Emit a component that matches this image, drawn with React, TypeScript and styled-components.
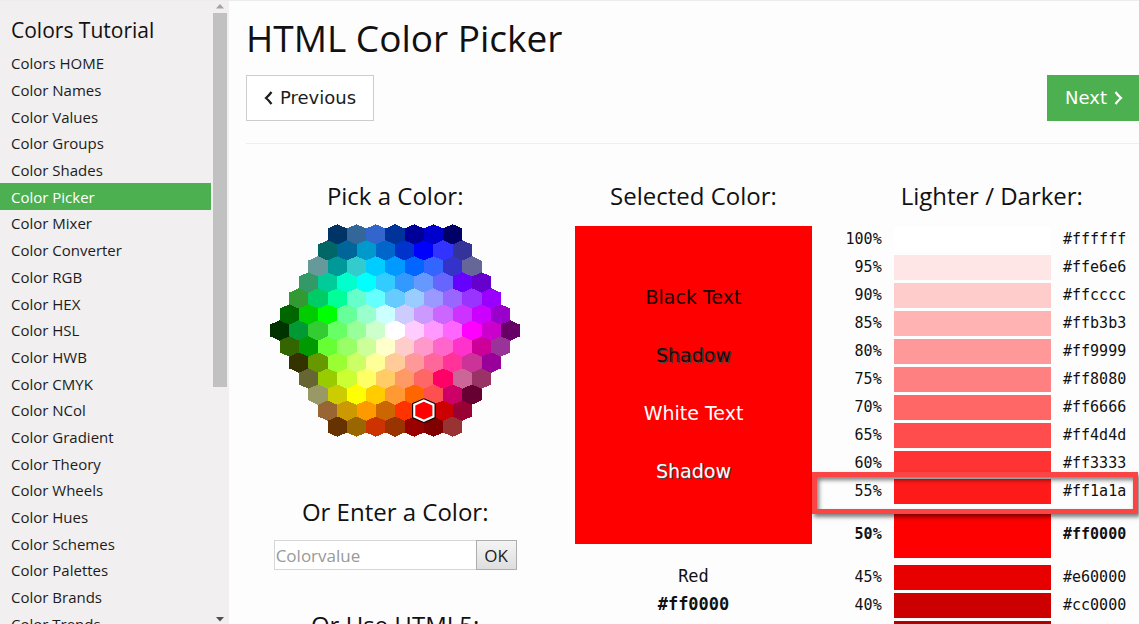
import React from "react";
import styled, { createGlobalStyle, css } from "styled-components";

const GlobalStyle = createGlobalStyle`
  *, *::before, *::after { box-sizing: border-box; }
  html, body { margin: 0; padding: 0; }
  body {
    font-family: "Open Sans", "Noto Sans", sans-serif;
    color: #111;
    background: #fefdfe;
    overflow: hidden;
  }
`;

const sans = `"DejaVu Sans", Verdana, sans-serif`;
const mono = `"DejaVu Sans Mono", Consolas, monospace`;

const Page = styled.div`
  display: flex;
  height: 100vh;
  overflow: hidden;
  border-top: 1px solid #ececee;
`;

const Sidebar = styled.aside`
  display: flex;
  flex: 0 0 229px;
  overflow: hidden;
  background: #f1eff0;
`;

const Nav = styled.nav`
  flex: 1;
  min-width: 0;
  padding-top: 12px;
`;

const NavTitle = styled.h2`
  margin: 0 0 2px;
  padding-left: 11px;
  font-size: 21px;
  font-weight: 400;
  line-height: 35px;
`;

const NavList = styled.ul`
  display: flex;
  flex-direction: column;
  height: 587px;
  margin: 0;
  padding: 0;
  list-style: none;
`;

const NavItem = styled.li`
  display: flex;
  flex: 1 1 0;
`;

const NavLink = styled.a<{ $active?: boolean }>`
  display: flex;
  flex: 1;
  align-items: center;
  padding-left: 11px;
  font-size: 15px;
  line-height: 20px;
  color: ${(p) => (p.$active ? "#fff" : "#1c1c1c")};
  background: ${(p) => (p.$active ? "#4caf50" : "transparent")};
  text-decoration: none;
`;

const Scrollbar = styled.div`
  display: flex;
  flex: 0 0 18px;
  flex-direction: column;
  align-items: center;
  padding: 3px 0 2px;
`;

const ScrollTrack = styled.div`
  flex: 1;
  align-self: stretch;
  padding: 4px 2px 0;
`;

const ScrollThumb = styled.div`
  height: 62%;
  background: #c1c1c1;
`;

const Main = styled.main`
  flex: 1;
  min-width: 0;
  margin-right: -2px;
  padding: 9px 0 0 17px;
`;

const Title = styled.h1`
  margin: 0 0 9px;
  font-size: 37px;
  font-weight: 400;
  line-height: 56px;
`;

const Pager = styled.div`
  display: flex;
  justify-content: space-between;
  padding-bottom: 22px;
  border-bottom: 1px solid #eeedf0;
`;

const PagerLink = styled.a<{ $primary?: boolean }>`
  display: flex;
  align-items: center;
  gap: 7px;
  padding: 0 17px;
  border: 1px solid ${(p) => (p.$primary ? "#4caf50" : "#ccc")};
  font-family: ${sans};
  font-size: 18px;
  line-height: 44px;
  color: ${(p) => (p.$primary ? "#fff" : "#1c1c1c")};
  background: ${(p) => (p.$primary ? "#4caf50" : "#fff")};
  text-decoration: none;
`;

const Columns = styled.div`
  display: grid;
  grid-template-columns: repeat(3, minmax(0, 1fr));
  padding-top: 34px;
`;

const Column = styled.section<{ $inset?: boolean }>`
  display: flex;
  flex-direction: column;
  align-items: center;
  padding: 0 ${(p) => (p.$inset ? 31 : 0)}px;
`;

const Heading = styled.h3`
  margin: 0 0 10px;
  font-size: 24px;
  font-weight: 400;
  line-height: 36px;
  white-space: nowrap;
`;

const HexMap = styled.svg`
  display: block;
  width: 250px;
  height: 213px;
  margin-bottom: 57px;
`;

const EntryForm = styled.form`
  display: flex;
  width: 243px;
  height: 30px;
  margin-bottom: 37px;
`;

const EntryInput = styled.input`
  flex: 1;
  min-width: 0;
  padding: 0 1px;
  border: 1px solid #d6d6d6;
  border-right: 0;
  font-family: inherit;
  font-size: 17px;
  background: #fff;
  &::placeholder { color: #999; opacity: 1; }
`;

const EntryButton = styled.button`
  flex: 0 0 41px;
  padding: 0;
  border: 1px solid #adadad;
  font-family: inherit;
  font-size: 17px;
  color: #1c1c1c;
  background: linear-gradient(#f4f4f4, #dedede);
`;

const Preview = styled.div`
  display: flex;
  flex-direction: column;
  align-self: stretch;
  height: 318px;
  margin: 2px 0 18px;
  padding: 42px 0 44px;
  background: #f00;
`;

const PreviewText = styled.div<{ $light?: boolean; $shadow?: boolean }>`
  display: flex;
  flex: 1;
  align-items: center;
  justify-content: center;
  font-family: ${sans};
  font-size: 19px;
  color: ${(p) => (p.$light ? "#fff" : "#1a0000")};
  ${(p) => p.$shadow && css`text-shadow: 1px 1px 0 #444;`}
`;

const ColorName = styled.div<{ $bold?: boolean }>`
  font-family: ${mono};
  font-size: 17px;
  font-weight: ${(p) => (p.$bold ? 700 : 400)};
  line-height: 28px;
`;

const ShadeArea = styled.div`
  position: relative;
  align-self: stretch;
  margin-top: 1px;
`;

const ShadeTable = styled.table`
  width: 100%;
  border-collapse: collapse;
  table-layout: fixed;
  font-family: ${mono};
  font-size: 15px;
  line-height: 20px;
`;

const ShadeRow = styled.tr<{ $selected?: boolean }>`
  height: ${(p) => (p.$selected ? 58 : 28)}px;
  font-weight: ${(p) => (p.$selected ? 700 : 400)};
`;

const Percent = styled.td`
  width: 51px;
  padding: 0 12px 0 0;
  text-align: right;
`;

const SwatchCell = styled.td`
  padding: 0;
`;

const Swatch = styled.div<{ $color: string; $selected?: boolean }>`
  height: ${(p) => (p.$selected ? 48 : 25)}px;
  background: ${(p) => p.$color};
`;

const Hex = styled.td`
  width: 90px;
  padding: 0 0 0 12px;
`;

const Callout = styled.div`
  position: absolute;
  top: 247px;
  left: -31px;
  right: 3px;
  height: 42px;
  border: 5px solid #fb4444;
  box-shadow: 2px 3px 4px rgba(0, 0, 0, 0.5), inset 2px 3px 4px rgba(0, 0, 0, 0.5);
`;

const links = [
  "Colors HOME", "Color Names", "Color Values", "Color Groups", "Color Shades",
  "Color Picker", "Color Mixer", "Color Converter", "Color RGB", "Color HEX",
  "Color HSL", "Color HWB", "Color CMYK", "Color NCol", "Color Gradient",
  "Color Theory", "Color Wheels", "Color Hues", "Color Schemes",
  "Color Palettes", "Color Brands", "Color Trends",
];

const hexRows = [
  "003366 336699 3366cc 003399 000099 0000cc 000066",
  "006666 006699 0099cc 0066cc 0033cc 0000ff 3333ff 333399",
  "669999 009999 33cccc 00ccff 0099ff 0066ff 3366ff 3333cc 666699",
  "339966 00cc99 00ffcc 00ffff 33ccff 3399ff 6699ff 6666ff 6600ff 6600cc",
  "339933 00cc66 00ff99 66ffcc 66ffff 66ccff 99ccff 9999ff 9966ff 9933ff 9900ff",
  "006600 00cc00 00ff00 66ff99 99ffcc ccffff ccccff cc99ff cc66ff cc33ff cc00ff 9900cc",
  "003300 009933 33cc33 66ff66 99ff99 ccffcc ffffff ffccff ff99ff ff66ff ff00ff cc00cc 660066",
  "336600 009900 66ff33 99ff66 ccff99 ffffcc ffcccc ff99cc ff66cc ff33cc cc0099 993399",
  "333300 669900 99ff33 ccff66 ffff99 ffcc99 ff9999 ff6699 ff3399 cc3399 990099",
  "666633 99cc00 ccff33 ffff66 ffcc66 ff9966 ff6666 ff0066 cc6699 993366",
  "999966 cccc00 ffff00 ffcc00 ff9933 ff6600 ff5050 cc0066 660033",
  "996633 cc9900 ff9900 cc6600 ff3300 ff0000 cc0000 990033",
  "663300 996600 cc3300 993300 990000 800000 993333",
].map((row) => row.split(" "));

const shades: [number, string][] = [
  [100, "#ffffff"], [95, "#ffe6e6"], [90, "#ffcccc"], [85, "#ffb3b3"],
  [80, "#ff9999"], [75, "#ff8080"], [70, "#ff6666"], [65, "#ff4d4d"],
  [60, "#ff3333"], [55, "#ff1a1a"], [50, "#ff0000"], [45, "#e60000"],
  [40, "#cc0000"], [35, "#b30000"],
];

const hexPoints = (cx: number, top: number) =>
  [[0, 0], [9, 4], [9, 15], [0, 19], [-9, 15], [-9, 4]]
    .map(([dx, dy]) => `${cx + dx},${top + dy}`)
    .join(" ");

function ColorMap() {
  const cells = hexRows.flatMap((row, r) =>
    row.map((color, c) => ({
      color,
      points: hexPoints(117 - (row.length - 1) * 9 + c * 18, r * 15),
    }))
  );
  const selected = cells.find((cell) => cell.color === "ff0000")!;
  return (
    <HexMap viewBox="0 0 234 199" overflow="visible" role="img" aria-label="Color map">
      {cells.map((cell) => (
        <polygon key={cell.points} points={cell.points} fill={`#${cell.color}`} shapeRendering="crispEdges" />
      ))}
      <polygon points={selected.points} fill="none" stroke="#000" strokeWidth="4" />
      <polygon points={selected.points} fill="#f00" stroke="#fff" strokeWidth="2" />
    </HexMap>
  );
}

function Chevron({ direction }: { direction: "left" | "right" }) {
  return (
    <svg width="9" height="14" viewBox="0 0 9 14" aria-hidden="true">
      <path
        d={direction === "left" ? "M7.5 1 Q5 4.5 2 7 Q5 9.5 7.5 13" : "M1.5 1 Q4 4.5 7 7 Q4 9.5 1.5 13"}
        fill="none"
        stroke="currentColor"
        strokeWidth="2.2"
      />
    </svg>
  );
}

export default function App() {
  return (
    <>
      <GlobalStyle />
      <Page>
        <Sidebar>
          <Nav>
            <NavTitle>Colors Tutorial</NavTitle>
            <NavList>
              {links.map((label) => (
                <NavItem key={label}>
                  <NavLink href="#" $active={label === "Color Picker"}>{label}</NavLink>
                </NavItem>
              ))}
            </NavList>
          </Nav>
          <Scrollbar aria-hidden="true">
            <svg width="8" height="5"><path d="M0 4.5 4 0l4 4.5z" fill="#a3a3a3" /></svg>
            <ScrollTrack><ScrollThumb /></ScrollTrack>
            <svg width="8" height="5"><path d="M0 0h8L4 4.5z" fill="#505050" /></svg>
          </Scrollbar>
        </Sidebar>
        <Main>
          <Title>HTML Color Picker</Title>
          <Pager>
            <PagerLink href="#"><Chevron direction="left" />Previous</PagerLink>
            <PagerLink href="#" $primary>Next<Chevron direction="right" /></PagerLink>
          </Pager>
          <Columns>
            <Column>
              <Heading>Pick a Color:</Heading>
              <ColorMap />
              <Heading as="label" htmlFor="colorvalue">Or Enter a Color:</Heading>
              <EntryForm onSubmit={(e) => e.preventDefault()}>
                <EntryInput id="colorvalue" type="text" placeholder="Colorvalue" />
                <EntryButton type="submit">OK</EntryButton>
              </EntryForm>
              <Heading>Or Use HTML5:</Heading>
            </Column>
            <Column $inset>
              <Heading>Selected Color:</Heading>
              <Preview>
                <PreviewText>Black Text</PreviewText>
                <PreviewText $shadow>Shadow</PreviewText>
                <PreviewText $light>White Text</PreviewText>
                <PreviewText $light $shadow>Shadow</PreviewText>
              </Preview>
              <ColorName>Red</ColorName>
              <ColorName $bold>#ff0000</ColorName>
            </Column>
            <Column>
              <Heading>Lighter / Darker:</Heading>
              <ShadeArea>
                <ShadeTable>
                  <tbody>
                    {shades.map(([percent, color]) => (
                      <ShadeRow key={percent} $selected={percent === 50}>
                        <Percent>{percent}%</Percent>
                        <SwatchCell><Swatch $color={color} $selected={percent === 50} /></SwatchCell>
                        <Hex>{color}</Hex>
                      </ShadeRow>
                    ))}
                  </tbody>
                </ShadeTable>
                <Callout />
              </ShadeArea>
            </Column>
          </Columns>
        </Main>
      </Page>
    </>
  );
}
